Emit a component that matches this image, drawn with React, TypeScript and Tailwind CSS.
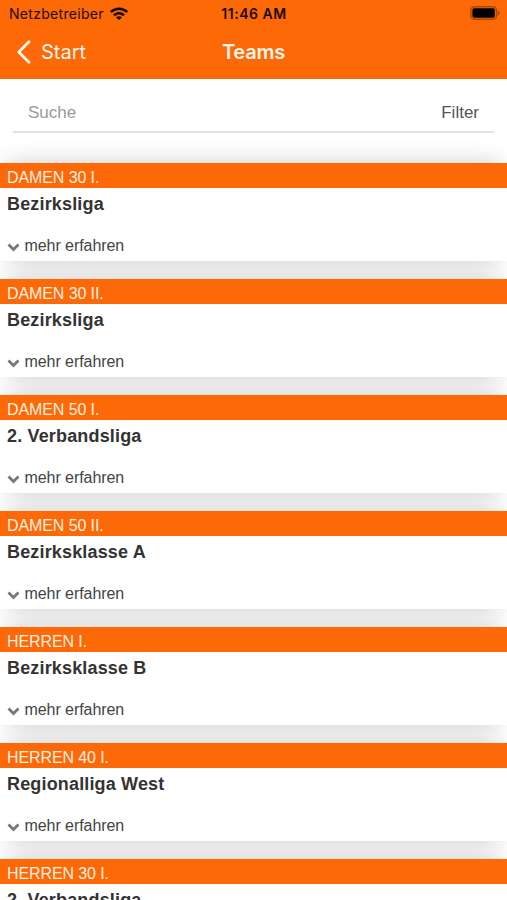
const teams = [
  { name: "DAMEN 30 I.", league: "Bezirksliga" },
  { name: "DAMEN 30 II.", league: "Bezirksliga" },
  { name: "DAMEN 50 I.", league: "2. Verbandsliga" },
  { name: "DAMEN 50 II.", league: "Bezirksklasse A" },
  { name: "HERREN I.", league: "Bezirksklasse B" },
  { name: "HERREN 40 I.", league: "Regionalliga West" },
  { name: "HERREN 30 I.", league: "2. Verbandsliga" },
];

function WifiIcon() {
  return (
    <svg viewBox="0 0 18 13" className="-mt-0.5 h-[13px] w-[18px]" fill="none" stroke="currentColor" strokeWidth="2.6">
      <path d="M.8 5C5.4.6 12.6.6 17.2 5" />
      <path d="M4 8.4c2.9-2.7 7.1-2.7 10 0" />
      <path d="M6.1 10.4 9 13l2.9-2.6c-1.6-1.5-4.2-1.5-5.8 0Z" fill="currentColor" stroke="none" />
    </svg>
  );
}

function BatteryIcon() {
  return (
    <svg viewBox="0 0 30 14" className="-mt-0.5 h-3.5 w-[30px]">
      <rect x="0.9" y="0.75" width="25.6" height="12.5" rx="3.6" fill="none" stroke="#a84707" strokeWidth="1.5" />
      <rect x="2.4" y="2.3" width="22.4" height="9.4" rx="1.7" fill="#000" />
      <path d="M27.8 4.6c2.4 1 2.4 3.8 0 4.8Z" fill="#a84707" />
    </svg>
  );
}

function StatusBar() {
  return (
    <div className="grid h-7 grid-cols-3 items-center pr-[7px] pl-[9px] text-[14px] text-[#1c0b00]">
      <div className="flex items-center gap-[6px]">
        <span className="-mt-0.5 tracking-[0.3px]">Netzbetreiber</span>
        <WifiIcon />
      </div>
      <span className="-mt-0.5 -ml-px text-center font-semibold tracking-[0.55px]">11:46 AM</span>
      <div className="flex justify-end">
        <BatteryIcon />
      </div>
    </div>
  );
}

function Header() {
  return (
    <header className="h-[79px] shrink-0 bg-[#fd6906] font-['Inter',sans-serif]">
      <StatusBar />
      <div className="grid h-12 grid-cols-3 items-center text-xl text-[#fff4ec]">
        <button type="button" className="flex items-center pl-4">
          <svg viewBox="0 0 16 24" className="h-6 w-4" fill="none" stroke="currentColor" strokeWidth="2.8" strokeLinecap="round" strokeLinejoin="round">
            <path d="M13 1.8 2.8 12 13 22.2" />
          </svg>
          <span className="ml-[9px]">Start</span>
        </button>
        <h1 className="text-center font-semibold tracking-[-0.2px]">Teams</h1>
      </div>
    </header>
  );
}

function TeamCard({ name, league }: { name: string; league: string }) {
  return (
    <li className="relative h-[98px] shrink-0 bg-white before:absolute before:inset-x-2 before:inset-y-0 before:-z-10 before:shadow-[0_0_22px_0_rgba(0,0,0,0.2)] before:content-['']">
      <h2 className="h-[25px] bg-[#fd6906] pl-[7px] text-base leading-[30px] tracking-[-0.1px] text-[#fff0e4]">
        {name}
      </h2>
      <p className="pl-[7px] text-[18px] leading-[33px] font-bold tracking-[0.16px] text-[#333]">{league}</p>
      <button type="button" className="mt-[13px] flex items-center pl-[7px] text-base leading-6 tracking-[-0.06px] text-[#444]">
        <svg viewBox="0 0 13 9" className="mt-[3px] mr-[4.5px] h-[9px] w-[13px]" fill="none" stroke="#777" strokeWidth="2.8">
          <path d="M1.5 1.5l5 5 5-5" />
        </svg>
        mehr erfahren
      </button>
    </li>
  );
}

export default function App() {
  return (
    <div className="flex h-[900px] w-[507px] flex-col overflow-hidden bg-white font-['Liberation_Sans',Arial,sans-serif]">
      <Header />
      <div className="mx-[13px] flex h-[54px] shrink-0 items-end justify-between border-b-2 border-[#e2e2e2] px-[15px] pb-[6px] text-[17px] leading-6">
        <span className="text-[#999]">Suche</span>
        <span className="text-[#555]">Filter</span>
      </div>
      <ul className="isolate mt-[30px] flex flex-col gap-[18px]">
        {teams.map((team) => (
          <TeamCard key={team.name} {...team} />
        ))}
      </ul>
    </div>
  );
}
